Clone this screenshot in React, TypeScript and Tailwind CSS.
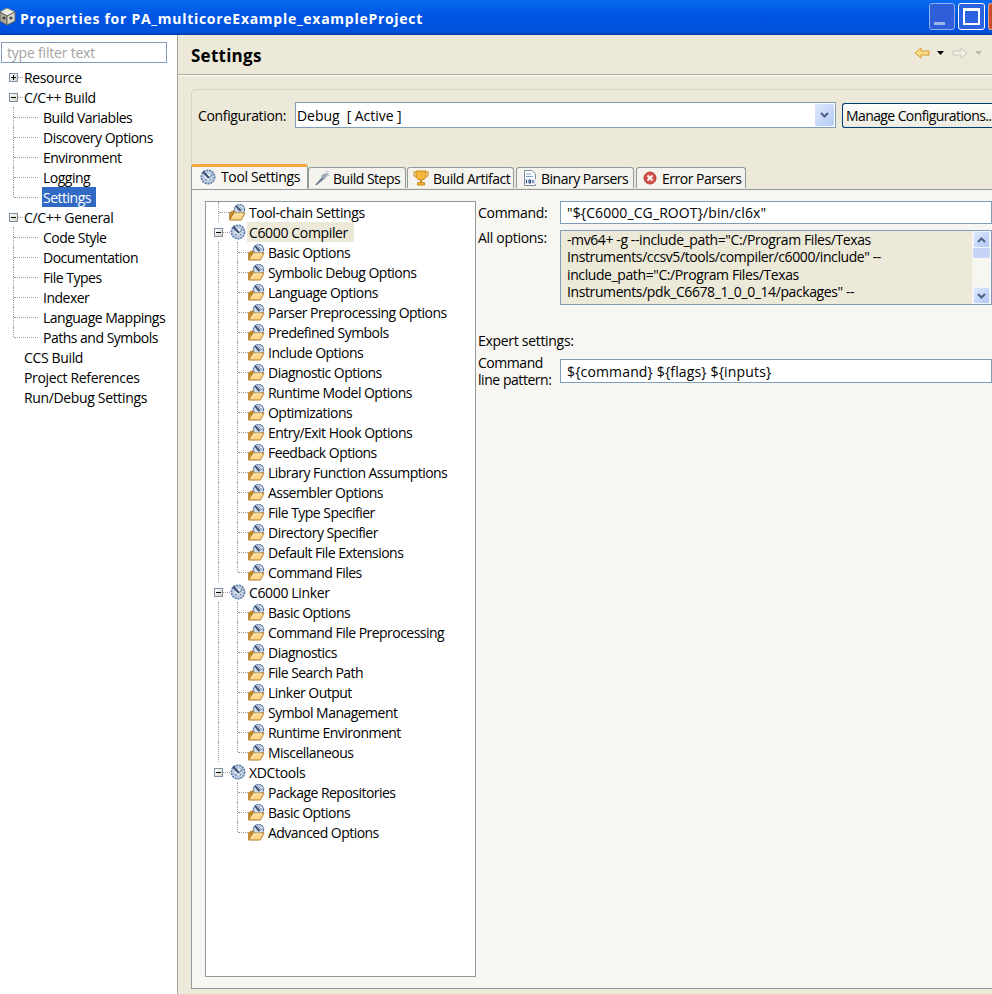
import React from "react";

const font = { fontFamily: '"Open Sans", "Liberation Sans", sans-serif' };

function Gear() {
  return (
    <svg width="16" height="16" viewBox="0 0 16 16" className="shrink-0">
      <circle cx="8" cy="8" r="6.6" fill="#dbe4f0" stroke="#5f7fa9" strokeWidth="1.8" strokeDasharray="2.2 0.7" />
      <circle cx="8" cy="8" r="4.2" fill="#eef3f9" stroke="#93a9c6" strokeWidth="1" />
      <path d="M3 2.5 L9 9" stroke="#3f5274" strokeWidth="2.2" />
      <path d="M9.2 9.2 L12.5 4.5" stroke="#6e88ac" strokeWidth="1.2" />
      <path d="M5 11.5 L7 10 M11 11 L9.8 10" stroke="#6e88ac" strokeWidth="1.2" />
    </svg>
  );
}

function FolderGear() {
  return (
    <svg width="17" height="17" viewBox="0 0 17 17" className="shrink-0">
      <circle cx="10.5" cy="5.5" r="5" fill="#dbe4f0" stroke="#5f7fa9" strokeWidth="1.4" strokeDasharray="2 0.6" />
      <path d="M7 2 L12 7" stroke="#3f5274" strokeWidth="1.8" />
      <path d="M10 2 L14 6 M8 5 L11 8.5" stroke="#8198b8" strokeWidth="1" />
      <path d="M0.5 8.5 L5 6.5 V9 L0.5 16 Z" fill="#c68a2c" stroke="#a8741f" strokeWidth="0.6" />
      <path d="M0.6 16 L5.2 9 H16 L12.4 16 Z" fill="#fcd68a" stroke="#b67d24" strokeWidth="1" />
      <path d="M3 14 L5.8 10 H14" stroke="#fff0c8" strokeWidth="1" fill="none" />
    </svg>
  );
}

function Expander({ open }: { open: boolean }) {
  return (
    <span className="flex h-[9px] w-[9px] shrink-0 items-center justify-center border border-[#7f8fa5] bg-gradient-to-br from-white to-[#d5d2c3]">
      <span className="relative block h-px w-[5px] bg-black">
        {!open && <span className="absolute left-[2px] top-[-2px] block h-[5px] w-px bg-black" />}
      </span>
    </span>
  );
}

type LeftRow = { t: string; kind: "plus" | "minus" | "child" | "none"; last?: boolean; selected?: boolean };

const leftRows: LeftRow[] = [
  { t: "Resource", kind: "plus" },
  { t: "C/C++ Build", kind: "minus" },
  { t: "Build Variables", kind: "child" },
  { t: "Discovery Options", kind: "child" },
  { t: "Environment", kind: "child" },
  { t: "Logging", kind: "child" },
  { t: "Settings", kind: "child", selected: true, last: true },
  { t: "C/C++ General", kind: "minus" },
  { t: "Code Style", kind: "child" },
  { t: "Documentation", kind: "child" },
  { t: "File Types", kind: "child" },
  { t: "Indexer", kind: "child" },
  { t: "Language Mappings", kind: "child" },
  { t: "Paths and Symbols", kind: "child", last: true },
  { t: "CCS Build", kind: "none" },
  { t: "Project References", kind: "none" },
  { t: "Run/Debug Settings", kind: "none" },
];

function LeftTree() {
  return (
    <div className="mt-[4px] flex flex-col">
      {leftRows.map((r) => (
        <div key={r.t} className="flex h-5 items-center">
          {r.kind === "child" ? (
            <>
              <span className={`ml-[12px] w-[1px] shrink-0 self-stretch border-l border-dotted border-[#a0a0a0] ${r.last ? "mb-[10px]" : ""}`} />
              <span className="w-[24px] shrink-0 border-t border-dotted border-[#a0a0a0]" />
              <span className={`ml-[4px] flex h-5 items-center pl-[1px] text-[14px] tracking-[-0.5px] ${r.selected ? "bg-[#316ac5] pr-[5px] text-white" : "pr-[1px] text-black"}`}>{r.t}</span>
            </>
          ) : (
            <>
              <span className="ml-[8px] flex w-[15px] shrink-0 items-center">
                {r.kind === "plus" && <Expander open={false} />}
                {r.kind === "minus" && <Expander open />}
                {r.kind !== "none" && <span className="w-[5px] border-t border-dotted border-[#a0a0a0]" />}
              </span>
              <span className="text-[14px] tracking-[-0.35px] text-black">{r.t}</span>
            </>
          )}
        </div>
      ))}
    </div>
  );
}

type TreeGroup = { t: string; children: string[] };
const groups: TreeGroup[] = [
  {
    t: "C6000 Compiler",
    children: [
      "Basic Options", "Symbolic Debug Options", "Language Options", "Parser Preprocessing Options",
      "Predefined Symbols", "Include Options", "Diagnostic Options", "Runtime Model Options",
      "Optimizations", "Entry/Exit Hook Options", "Feedback Options", "Library Function Assumptions",
      "Assembler Options", "File Type Specifier", "Directory Specifier", "Default File Extensions", "Command Files",
    ],
  },
  {
    t: "C6000 Linker",
    children: [
      "Basic Options", "Command File Preprocessing", "Diagnostics", "File Search Path", "Linker Output",
      "Symbol Management", "Runtime Environment", "Miscellaneous",
    ],
  },
  { t: "XDCtools", children: ["Package Repositories", "Basic Options", "Advanced Options"] },
];

function SettingsTree() {
  return (
    <div className="flex h-[776px] w-[271px] shrink-0 flex-col border border-[#919b9c] bg-white">
      <div className="flex h-5 items-center">
        <span className="ml-[12px] w-[1px] self-stretch border-l border-dotted border-[#a0a0a0]" />
        <span className="w-[10px] border-t border-dotted border-[#a0a0a0]" />
        <FolderGear />
        <span className="ml-[3px] text-[14px] tracking-[-0.4px]">Tool-chain Settings</span>
      </div>
      {groups.map((g, gi) => (
        <React.Fragment key={g.t}>
          <div className="flex h-5 items-center">
            <span className="ml-[8px] flex w-[16px] shrink-0 items-center">
              <Expander open />
              <span className="w-[7px] border-t border-dotted border-[#a0a0a0]" />
            </span>
            <Gear />
            <span className={`ml-[1px] flex h-5 items-center pl-[2px] pr-[6px] text-[14px] tracking-[-0.35px] ${gi === 0 ? "bg-[#ece9d8]" : ""}`}>{g.t}</span>
          </div>
          {g.children.map((c, i) => (
            <div key={c} className="flex h-5 items-center">
              {gi < 2 ? (
                <span className="ml-[12px] w-[1px] shrink-0 self-stretch border-l border-dotted border-[#a0a0a0]" />
              ) : (
                <span className="ml-[12px] w-[1px] shrink-0" />
              )}
              <span className={`ml-[18px] w-[1px] shrink-0 self-stretch border-l border-dotted border-[#a0a0a0] ${i === g.children.length - 1 ? "mb-[10px]" : ""}`} />
              <span className="w-[10px] shrink-0 border-t border-dotted border-[#a0a0a0]" />
              <FolderGear />
              <span className="ml-[3px] text-[14px] tracking-[-0.53px]">{c}</span>
            </div>
          ))}
        </React.Fragment>
      ))}
    </div>
  );
}

function Tab({ label, icon, className }: { label: string; icon: React.ReactNode; className: string }) {
  return (
    <div className={`mt-[3px] flex h-[21px] items-center rounded-t-[3px] border border-b-0 border-[#919b9c] bg-[#f4f3ee] pl-[5px] text-[14px] tracking-[-0.5px] whitespace-nowrap ${className}`}>
      {icon}
      <span>{label}</span>
    </div>
  );
}

function Steps() {
  return (
    <svg width="17" height="15" viewBox="0 0 17 15" className="shrink-0">
      <path d="M1 14 L8 6 L10 8 L3 14 Z" fill="#6f7d8e" />
      <path d="M7 5 L9 3 L15 2 L10 9 Z" fill="#9aa7b4" />
      <path d="M11 1 l4 -1 M13 5 l3 -1" stroke="#b8c2cc" strokeWidth="1" />
    </svg>
  );
}
function Trophy() {
  return (
    <svg width="16" height="16" viewBox="0 0 16 16" className="shrink-0">
      <path d="M3 1 H13 V6 C13 9 10 10 8 10 C6 10 3 9 3 6 Z" fill="#f2b73a" stroke="#c98a1c" />
      <path d="M3 2 H1 V5 C1 6 2 7 3.5 7 M13 2 H15 V5 C15 6 14 7 12.5 7" fill="none" stroke="#d59a2a" strokeWidth="1.2" />
      <path d="M7 10 H9 V12 H7 Z" fill="#c98a1c" />
      <path d="M4.5 12.5 H11.5 V15 H4.5 Z" fill="#f2b73a" stroke="#c98a1c" />
    </svg>
  );
}
function Binary() {
  return (
    <svg width="14" height="16" viewBox="0 0 14 16" className="shrink-0">
      <path d="M1.5 .5 H9 L12.5 4 V15.5 H1.5 Z" fill="#fff" stroke="#7d8ca3" />
      <path d="M3 4 H8 M3 6.5 H10" stroke="#7aa0cc" strokeWidth="1" />
      <path d="M2 9 H13 V14 H2 Z" fill="#dfe7f2" />
      <path d="M3.5 10 V13 M6 10 H7.5 V13 H6 Z M10 10 V13" fill="none" stroke="#23416f" strokeWidth="1" />
    </svg>
  );
}
function ErrorIcon() {
  return (
    <svg width="14" height="14" viewBox="0 0 14 14" className="shrink-0">
      <circle cx="7" cy="7" r="6" fill="#d9534a" stroke="#b5352f" />
      <path d="M4.5 4.5 L9.5 9.5 M9.5 4.5 L4.5 9.5" stroke="#fff" strokeWidth="1.8" />
    </svg>
  );
}

function ScrollButton({ up }: { up: boolean }) {
  return (
    <div className="flex h-[17px] w-[17px] items-center justify-center rounded-[2px] border border-[#f0f4fd] bg-gradient-to-br from-[#e1eafe] to-[#aec8f7]">
      <svg width="9" height="6" viewBox="0 0 9 6">
        <path d={up ? "M1 5 L4.5 1.5 L8 5" : "M1 1 L4.5 4.5 L8 1"} fill="none" stroke="#4d6185" strokeWidth="2" />
      </svg>
    </div>
  );
}

export default function App() {
  return (
    <div style={font} className="flex h-[994px] w-[992px] flex-col overflow-hidden bg-[#ece9d8] text-black">
      <div className="flex h-[35px] shrink-0 items-center border-b-2 border-[#0042b8] bg-gradient-to-b from-[#0a6af0] via-[#0054e3] to-[#0050dc]">
        <div className="ml-[-1px] shrink-0">
          <svg width="18" height="20" viewBox="0 0 18 20">
            <path d="M8 1 L16 5 L8 9 L1 5 Z" fill="#efeee6" stroke="#8a8a80" />
            <path d="M1 5 L8 9 V18 L1 14 Z" fill="#a9a79c" stroke="#66665e" />
            <path d="M16 5 L8 9 V18 L16 14 Z" fill="#d8d6ca" stroke="#66665e" />
            <circle cx="5" cy="11" r="1.6" fill="#4b4b46" />
            <circle cx="12" cy="11" r="1.6" fill="#4b4b46" />
          </svg>
        </div>
        <span style={{ fontFamily: '"Open Sans", sans-serif' }} className="mt-[3px] ml-[3px] text-[14px] font-bold tracking-[0.72px] whitespace-nowrap text-white">
          Properties for PA_multicoreExample_exampleProject
        </span>
        <div className="ml-auto flex shrink-0 items-center gap-[3px] pb-[1px]">
          <div className="relative h-[27px] w-[26px] rounded-[3px] border border-[#8fb1ee] bg-[#2f5fd8]">
            <span className="absolute bottom-[4px] left-[4px] block h-[3px] w-[11px] bg-[#9db4ec]" />
          </div>
          <div className="flex h-[27px] w-[27px] items-center justify-center rounded-[3px] border border-white bg-[#2b62e0]">
            <span className="block h-[17px] w-[17px] border-2 border-t-[3px] border-white" />
          </div>
          <div className="h-[27px] w-[4px] rounded-l-[3px] border border-r-0 border-[#e8a58f] bg-[#c8502a]" />
        </div>
      </div>

      <div className="flex min-h-0 flex-1">
        <aside className="w-[178px] shrink-0 border-r border-[#a8a597] bg-white pt-[7px] pl-[1px]">
          <div className="flex h-[21px] w-[166px] items-center border border-[#7f9db9] pl-[5px] text-[14px] tracking-[-0.2px] text-[#a3a3a3]">
            type filter text
          </div>
          <LeftTree />
        </aside>

        <main className="flex min-w-0 flex-1 flex-col">
          <div className="flex h-[40px] shrink-0 items-center justify-between border-b border-[#aca899] pl-[13px]">
            <span className="mt-[2px] text-[17px] font-bold tracking-[0.25px]">Settings</span>
            <div className="flex items-center self-start pt-[12px]">
              <svg width="16" height="12" viewBox="0 0 16 12">
                <path d="M7 1 L1 6 L7 11 V8 H15 V4 H7 Z" fill="#fbdc8a" stroke="#d99a2a" />
              </svg>
              <svg className="ml-[7px]" width="7" height="4" viewBox="0 0 7 4"><path d="M0 0 H7 L3.5 4 Z" fill="#000" /></svg>
              <svg className="ml-[8px]" width="16" height="12" viewBox="0 0 16 12">
                <path d="M9 1 L15 6 L9 11 V8 H1 V4 H9 Z" fill="#f3f1e6" stroke="#c9c7bb" />
              </svg>
              <svg className="mr-[10px] ml-[7px]" width="7" height="4" viewBox="0 0 7 4"><path d="M0 0 H7 L3.5 4 Z" fill="#b9b7ab" /></svg>
            </div>
          </div>

          <div className="flex flex-1 flex-col border-t border-white pl-[13px]">
            <div className="mt-[13px] flex h-[75px] shrink-0 items-start rounded-tl-[5px] border-t border-l border-[#d8d4c0] pt-[13px] pl-[6px]">
              <span className="mt-[2px] w-[97px] shrink-0 text-[14px] tracking-[-0.35px]">Configuration:</span>
              <div className="mt-[-1px] flex h-[26px] w-[541px] shrink-0 items-center border border-[#7f9db9] bg-white pl-[1px] text-[14px] tracking-[-0.05px]">
                <span className="flex-1 whitespace-pre">Debug  [ Active ]</span>
                <div className="mr-px flex h-[22px] w-[19px] items-center justify-center rounded-[2px] bg-gradient-to-br from-[#dfe8fd] to-[#b2cbf6]">
                  <svg width="9" height="6" viewBox="0 0 9 6"><path d="M1 1 L4.5 4.5 L8 1" fill="none" stroke="#4d6185" strokeWidth="2" /></svg>
                </div>
              </div>
              <div className="ml-[6px] flex h-[25px] w-[150px] shrink-0 items-center rounded-l-[3px] border border-r-0 border-[#003c74] bg-gradient-to-b from-white to-[#ecebe0] pl-[3px] text-[14px] tracking-[-0.6px] whitespace-nowrap">
                Manage Configurations...
              </div>
            </div>

            <div className="flex h-[25px] shrink-0">
              <div className="z-10 flex h-[25px] w-[117px] items-center gap-[5px] rounded-t-[3px] border-x border-t-[3px] border-x-[#919b9c] border-t-[#f0a83c] bg-[#f7f6f2] pb-[3px] pl-[8px] text-[14px] tracking-[-0.35px]">
                <Gear />
                <span>Tool Settings</span>
              </div>
              <Tab label="Build Steps" icon={<Steps />} className="w-[98px] gap-[2px]" />
              <Tab label="Build Artifact" icon={<Trophy />} className="ml-[1px] w-[107px] gap-[4px]" />
              <Tab label="Binary Parsers" icon={<Binary />} className="ml-[2px] w-[118px] gap-[4px] pl-[6px]" />
              <Tab label="Error Parsers" icon={<ErrorIcon />} className="ml-[2px] w-[110px] gap-[5px] pl-[6px]" />
            </div>

            <div className="mb-[5px] flex flex-1 border-t border-b border-l border-[#919b9c] bg-[#f7f6f2] pt-[11px] pl-[13px]">
              <SettingsTree />
              <div className="flex min-w-0 flex-1 flex-col pl-[2px] text-[14px] tracking-[-0.3px]">
                <div className="flex items-center">
                  <span className="w-[82px] shrink-0">Command:</span>
                  <div className="flex h-[23px] flex-1 items-center border border-[#7f9db9] bg-white pl-[6px] tracking-[0.1px]">"$&#123;C6000_CG_ROOT&#125;/bin/cl6x"</div>
                </div>
                <div className="mt-[6px] flex items-start">
                  <span className="mt-[-3px] w-[82px] shrink-0">All options:</span>
                  <div className="flex h-[75px] flex-1 border border-[#7f9db9] bg-[#ece9d8] pl-[6px]">
                    <div className="w-[404px] shrink-0 text-[14px] leading-[17.3px] tracking-[-0.4px] whitespace-nowrap">
                      <div>-mv64+ -g --include_path="C:/Program Files/Texas</div>
                      <div>Instruments/ccsv5/tools/compiler/c6000/include" --</div>
                      <div>include_path="C:/Program Files/Texas</div>
                      <div>Instruments/pdk_C6678_1_0_0_14/packages" --</div>
                    </div>
                    <div className="ml-auto flex w-[19px] shrink-0 flex-col items-center bg-[#f7f6f0]">
                      <ScrollButton up />
                      <div className="h-[10px] w-[17px] rounded-[2px] bg-[#c6d5f7]" />
                      <div className="flex-1" />
                      <ScrollButton up={false} />
                    </div>
                  </div>
                </div>
                <div className="mt-[26px] leading-5">Expert settings:</div>
                <div className="mt-[2px] flex items-start">
                  <span className="mt-[1px] w-[82px] shrink-0 leading-[17px] tracking-[-0.45px]">Command<br />line pattern:</span>
                  <div className="mt-[6px] flex h-[24px] flex-1 items-center border border-[#7f9db9] bg-white pl-[6px] tracking-[0.15px]">$&#123;command&#125; $&#123;flags&#125; $&#123;inputs&#125;</div>
                </div>
              </div>
            </div>
          </div>
        </main>
      </div>
    </div>
  );
}
